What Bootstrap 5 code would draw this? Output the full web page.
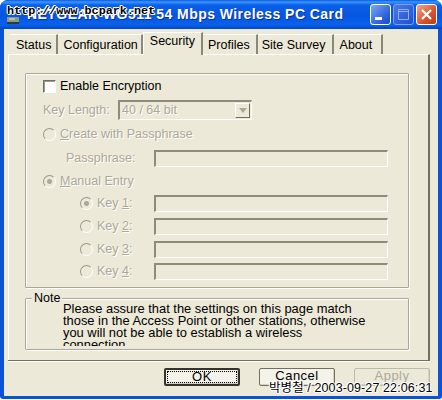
<!doctype html>
<html lang="en">
<head>
  <meta charset="utf-8">
  <meta name="viewport" content="width=device-width, initial-scale=1">
  <title>NETGEAR WG511 54 Mbps Wireless PC Card</title>
  <link href="https://cdn.jsdelivr.net/npm/bootstrap@5.3.3/dist/css/bootstrap.min.css" rel="stylesheet">
  <script src="https://cdn.jsdelivr.net/npm/bootstrap@5.3.3/dist/js/bootstrap.bundle.min.js"></script>
  <style>
    html, body { margin: 0; width: 442px; height: 400px; overflow: hidden; background: #fff; }
    body { font-family: "Liberation Sans", Arial, sans-serif; font-size: 12.5px; line-height: 15px; color: #000; }
    u { text-decoration-thickness: 1px; text-underline-offset: 1px; }

    .xp-window { position: relative; width: 442px; height: 399px; background: #0a53d8; border-radius: 8px 8px 3px 3px; overflow: hidden; }
    .xp-title { height: 29px; padding: 0 5px 0 6px; background: linear-gradient(#0a5be0 0, #3d95ff 2px, #0a5fe8 5px, #0556e0 16px, #0a62ec 25px, #0344c4 29px); }
    .xp-title-icon { flex: none; margin: 9px 7px 0 0; }
    .xp-title-text { color: #fff; font-weight: 700; font-size: 14px; letter-spacing: .45px; text-shadow: 1px 1px 0 #0b2f9a; white-space: nowrap; }
    .xp-ctls { gap: 2px; }
    .xp-ctl { width: 21px; height: 21px; border: 1px solid #fff; border-radius: 3px; background: linear-gradient(135deg, #7fa6f4, #2a5fdc 70%, #1d49c4); }
    .xp-ctl.is-off { border-color: #7d9ff0; background: linear-gradient(135deg, #4b7ae6, #2a5cdc 70%, #2450cc); }
    .xp-ctl.is-close { background: linear-gradient(135deg, #f0a58c, #d9532c 60%, #c03a18); }
    .xp-body { height: 367px; margin: 0 4px; padding-top: 5px; background: #ece9d8; }

    .xp-tabs { height: 20px; margin-left: 2px; padding-left: 4px; align-items: flex-end; }
    .xp-tab { height: 20px; padding: 3px 6px 0 5px; color: #000; border-right: 2px solid #8a8878; border-top: 1px solid #fff; white-space: nowrap; }
    .xp-tab:nth-child(1) { padding-left: 6px; padding-right: 5px; }
    .xp-tab:nth-child(2) { padding-right: 3px; }
    .xp-tab:nth-child(5) { padding-left: 4px; }
    .xp-tab:nth-child(6) { padding-left: 6px; padding-right: 9px; }
    .xp-tab.is-on { height: 23px; padding: 1px 6px 0 6px; margin-bottom: -1px; background: #ece9d8; border-left: 1px solid #fff; position: relative; z-index: 1; }

    .xp-page { width: 422px; height: 306px; margin-left: 4px; padding: 18px 19px 0 16px; border: 1px solid #fff; border-right: 2px solid #716f64; border-bottom: 0; }
    .xp-group { position: relative; border: 1px solid #aca899; box-shadow: inset 1px 1px 0 #fff, 1px 1px 0 #fff; border-radius: 1px; }
    .xp-group-main { height: 215px; padding: 1px 21px 0 17px; margin-bottom: 10px; }
    .xp-group-note { height: 52px; padding: 4px 0 0 37px; }
    .xp-legend { position: absolute; left: 6px; top: -8px; padding: 0 2px; background: #ece9d8; font-size: 12.5px; line-height: 15px; }
    .xp-note-text { display: block; height: 43px; overflow: hidden; font-size: 12.9px; line-height: 12px; white-space: nowrap; }

    .xp-line { height: 22px; align-items: center; white-space: nowrap; }
    .xp-step-1 { margin-top: 1px; }
    .xp-step-2 { margin-top: 2px; }
    .xp-indent-key { margin-left: 37px; }
    .xp-indent-pass { margin-left: 23px; }
    .xp-off { color: #aca899; text-shadow: 1px 1px 0 #fff; }
    .xp-check { width: 13px; height: 13px; border: 1px solid #716f64; border-right-color: #fff; border-bottom-color: #fff; box-shadow: inset 1px 1px 0 #9c9a8c; background: #fff; margin-right: 4px; flex: none; }
    .xp-radio { width: 13px; height: 13px; border-radius: 50%; flex: none; margin-right: 4px; background: #ece9d8; border: 1px solid; border-color: #9a9888 #fff #fff #9a9888; }
    .xp-radio.is-set { background: radial-gradient(circle, #aca899 0 2px, #ece9d8 3px); }
    .xp-field { height: 17px; flex: none; background: #ece9d8; border: 1px solid; border-width: 2px 1px 1px 2px; border-color: #8d8b7c #fff #fff #8d8b7c; }
    .xp-field-wide { width: 234px; }
    .xp-select { width: 134px; height: 20px; padding: 0 1px 0 2px; align-items: center; justify-content: space-between; }
    .xp-arrow { width: 15px; height: 15px; border: 1px solid; border-color: #fff #716f64 #716f64 #fff; background: #ece9d8; align-items: center; justify-content: center; }
    .xp-arrow::after { content: ""; border: 4px solid transparent; border-top: 5px solid #aca899; border-bottom: 0; }
    .xp-lbl-key { width: 57px; flex: none; }
    .xp-lbl-pass { width: 88px; flex: none; }
    .xp-lbl-len { width: 75px; flex: none; }

    .xp-sep { height: 2px; margin: 0 0 0 4px; width: 422px; background: #716f64; border-bottom: 1px solid #fff; }
    .xp-foot { height: 30px; padding: 6px 0 0 160px; gap: 19px; }
    .xp-btn { width: 76px; height: 18px; padding: 0 0 3px; font-size: 13px; line-height: 13px; letter-spacing: .5px; border-radius: 2px; border: 1px solid #716f64; background: #f4f3ea; color: #000; box-shadow: inset -1px -1px 0 #d6d2c2; }
    .xp-btn.is-default { border: 2px solid #35342c; position: relative; }
    .xp-btn.is-default::before { content: ""; position: absolute; inset: 1px; border: 1px dotted #000; }
    .xp-btn:disabled { color: #aca899; opacity: 1; border-color: #bdbaa8; background: #ece9d8; }

    .xp-stamp { position: absolute; color: #000; white-space: nowrap; text-shadow: 1px 1px 0 #fff, -1px 0 0 #fff, 0 -1px 0 #fff, 1px 0 0 #fff, 0 1px 0 #fff, -1px -1px 0 #fff; }
    .xp-stamp-url { left: 7px; top: 4px; font-family: "Liberation Mono", monospace; font-size: 11.75px; font-weight: 700; }
    .xp-stamp-date { left: 269px; top: 381px; font-family: "Liberation Sans", "Noto Sans CJK KR", sans-serif; font-size: 12.5px; letter-spacing: .1px; }
  </style>
</head>
<body>
  <div class="xp-window">
    <div class="xp-title d-flex align-items-center">
      <svg class="xp-title-icon" width="14" height="14" viewBox="0 0 14 14"><path d="M1 5h12v5H1z" fill="#8a9a86"/><path d="M1 10h12v2H1z" fill="#2f3a30"/><path d="M3 7h6" stroke="#dfe8d8"/></svg>
      <span class="xp-title-text flex-grow-1">NETGEAR WG511 54 Mbps Wireless PC Card</span>
      <div class="d-flex align-items-center xp-ctls">
        <div class="xp-ctl"><svg class="d-block" width="19" height="19" viewBox="0 0 19 19"><rect x="4" y="12" width="7" height="3" fill="#fff"/></svg></div>
        <div class="xp-ctl is-off"><svg class="d-block" width="19" height="19" viewBox="0 0 19 19"><path d="M4.5 4.5h10v10h-10zM4.5 6.5h10" fill="none" stroke="#8fb0f4" stroke-width="1"/></svg></div>
        <div class="xp-ctl is-close"><svg class="d-block" width="19" height="19" viewBox="0 0 19 19"><path d="M5 5l9 9M14 5l-9 9" stroke="#fff" stroke-width="2.2"/></svg></div>
      </div>
    </div>
    <div class="xp-body">
      <div class="xp-tabs d-flex">
        <span class="xp-tab">Status</span>
        <span class="xp-tab">Configuration</span>
        <span class="xp-tab is-on">Security</span>
        <span class="xp-tab">Profiles</span>
        <span class="xp-tab">Site Survey</span>
        <span class="xp-tab">About</span>
      </div>
      <div class="xp-page">
        <div class="xp-group xp-group-main">
          <div class="xp-line d-flex"><span class="xp-check"></span><span>Enable Encryption</span></div>
          <div class="xp-line d-flex xp-off xp-step-2"><span class="xp-lbl-len">Key Length:</span>
            <div class="xp-field xp-select d-flex"><span>40 / 64 bit</span><span class="xp-arrow d-flex"></span></div></div>
          <div class="xp-line d-flex xp-off xp-step-2"><span class="xp-radio"></span><span><u>C</u>reate with Passphrase</span></div>
          <div class="xp-line d-flex xp-off xp-step-2 xp-indent-pass"><span class="xp-lbl-pass">Passphrase:</span><span class="xp-field xp-field-wide"></span></div>
          <div class="xp-line d-flex xp-off xp-step-1"><span class="xp-radio is-set"></span><span><u>M</u>anual Entry</span></div>
          <div class="xp-line d-flex xp-off xp-indent-key"><span class="xp-radio is-set"></span><span class="xp-lbl-key">Key <u>1</u>:</span><span class="xp-field xp-field-wide"></span></div>
          <div class="xp-line d-flex xp-off xp-step-1 xp-indent-key"><span class="xp-radio"></span><span class="xp-lbl-key">Key <u>2</u>:</span><span class="xp-field xp-field-wide"></span></div>
          <div class="xp-line d-flex xp-off xp-step-1 xp-indent-key"><span class="xp-radio"></span><span class="xp-lbl-key">Key <u>3</u>:</span><span class="xp-field xp-field-wide"></span></div>
          <div class="xp-line d-flex xp-off xp-indent-key"><span class="xp-radio"></span><span class="xp-lbl-key">Key <u>4</u>:</span><span class="xp-field xp-field-wide"></span></div>
        </div>
        <div class="xp-group xp-group-note">
          <span class="xp-legend">Note</span>
          <span class="xp-note-text">Please assure that the settings on this page match<br>those in the Access Point or other stations, otherwise<br>you will not be able to establish a wireless<br>connection.</span>
        </div>
      </div>
      <div class="xp-sep"></div>
      <div class="xp-foot d-flex">
        <button class="xp-btn is-default" type="button">OK</button>
        <button class="xp-btn" type="button">Cancel</button>
        <button class="xp-btn" type="button" disabled>Apply</button>
      </div>
    </div>
    <span class="xp-stamp xp-stamp-url">http://www.bcpark.net</span>
    <span class="xp-stamp xp-stamp-date">박병철 / 2003-09-27 22:06:31</span>
  </div>
</body>
</html>
